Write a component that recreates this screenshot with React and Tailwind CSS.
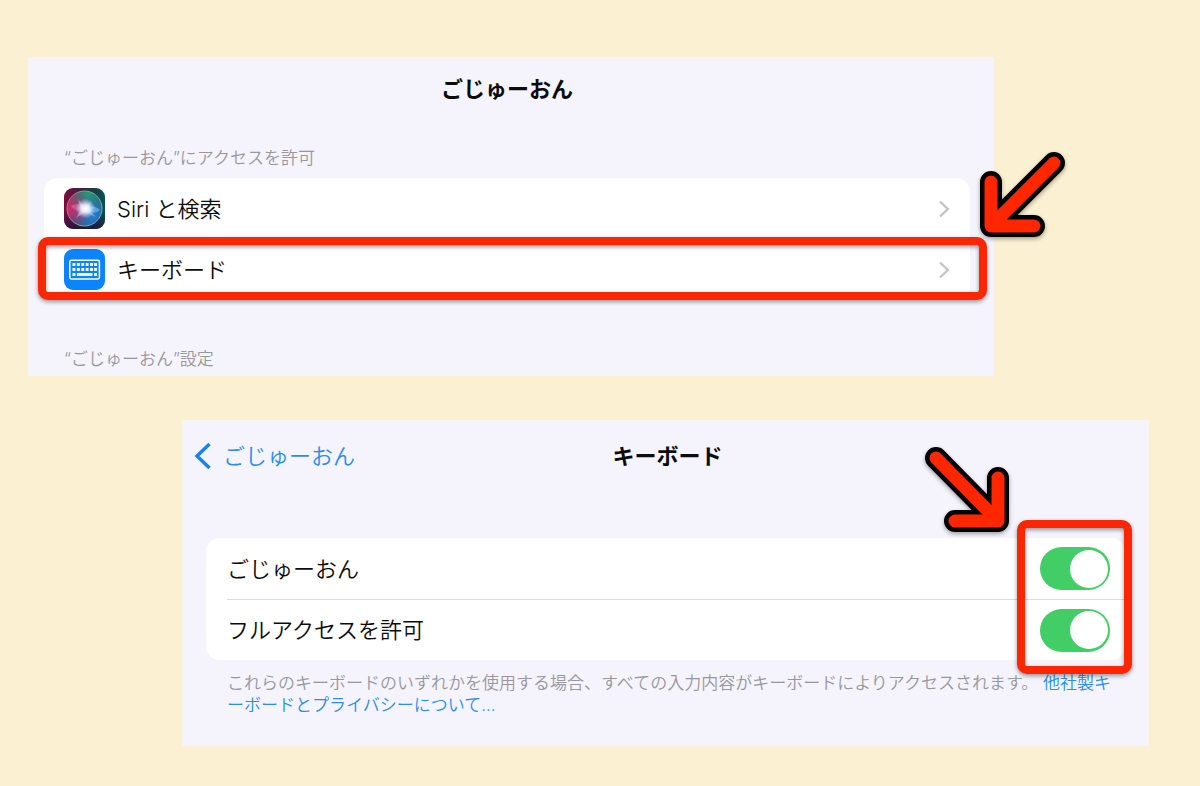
function SiriIcon() {
  return (
    <svg viewBox="0 0 41 41" className="size-[41px] shrink-0" aria-hidden="true">
      <defs>
        <linearGradient id="siri-bg" x1="0" y1="0" x2="1" y2="0">
          <stop offset="0" stopColor="#7d0a3c" />
          <stop offset="0.45" stopColor="#3b2440" />
          <stop offset="1" stopColor="#06544a" />
        </linearGradient>
        <linearGradient id="siri-shade" x1="0" y1="0" x2="0" y2="1">
          <stop offset="0.55" stopColor="#1f1440" stopOpacity="0" />
          <stop offset="1" stopColor="#1f1440" stopOpacity="0.8" />
        </linearGradient>
        <radialGradient id="siri-pink" cx="0.1" cy="0.5" r="0.6">
          <stop offset="0" stopColor="#d02c6c" />
          <stop offset="1" stopColor="#d02c6c" stopOpacity="0" />
        </radialGradient>
        <radialGradient id="siri-green" cx="0.6" cy="0.1" r="0.65">
          <stop offset="0" stopColor="#219a7a" />
          <stop offset="1" stopColor="#219a7a" stopOpacity="0" />
        </radialGradient>
        <radialGradient id="siri-blue" cx="0.72" cy="0.72" r="0.6">
          <stop offset="0" stopColor="#2380cf" />
          <stop offset="1" stopColor="#2380cf" stopOpacity="0" />
        </radialGradient>
        <radialGradient id="siri-glow" cx="0.5" cy="0.5" r="0.5">
          <stop offset="0" stopColor="#ffffff" />
          <stop offset="0.4" stopColor="#f2f7ff" stopOpacity="0.85" />
          <stop offset="1" stopColor="#d8dcff" stopOpacity="0" />
        </radialGradient>
        <linearGradient id="siri-ring" x1="0" y1="0.3" x2="1" y2="0.7">
          <stop offset="0" stopColor="#f0568d" />
          <stop offset="0.5" stopColor="#6fae9f" />
          <stop offset="1" stopColor="#54b4ee" />
        </linearGradient>
      </defs>
      <rect width="41" height="41" rx="9" fill="url(#siri-bg)" />
      <rect width="41" height="41" rx="9" fill="url(#siri-shade)" />
      <circle cx="20.5" cy="20.5" r="17.5" fill="#36506c" />
      <circle cx="20.5" cy="20.5" r="17.5" fill="url(#siri-green)" />
      <circle cx="20.5" cy="20.5" r="17.5" fill="url(#siri-blue)" />
      <circle cx="20.5" cy="20.5" r="17.5" fill="url(#siri-pink)" />
      <path d="M7 18c5-3 9-3 14 2-5 4-9 4-14-2z" fill="#ef9abf" opacity="0.35" />
      <path d="M21 20c5-3 11-2 15 2-4 4-10 4-15-2z" fill="#6cc3ff" opacity="0.6" />
      <path d="M14 11l7 9 6-7-3 8 8 8-11-5-9 6 5-9z" fill="#e6e4fa" opacity="0.4" />
      <circle cx="21.5" cy="20.5" r="10" fill="url(#siri-glow)" />
      <circle cx="20.5" cy="20.5" r="17.5" fill="none" stroke="url(#siri-ring)" strokeWidth="1" />
    </svg>
  );
}

function KeyboardIcon() {
  const cols = [8.5, 12.9, 17.3, 21.7, 26.1, 30.1];
  return (
    <svg viewBox="0 0 41 41" className="size-[41px] shrink-0" aria-hidden="true">
      <rect width="41" height="41" rx="9" fill="#0a84ff" />
      <rect x="5.8" y="11.3" width="29.6" height="18.6" rx="1.6" fill="none" stroke="#fff" strokeWidth="1.5" />
      {cols.map((x) => (
        <g key={x} fill="#fff">
          <rect x={x} y="14" width="2.9" height="2.9" />
          <rect x={x} y="19" width="2.9" height="2.9" />
        </g>
      ))}
      <rect x="8.5" y="24" width="2.9" height="2.9" fill="#fff" />
      <rect x="12.9" y="24" width="15.6" height="2.9" fill="#fff" />
      <rect x="30.1" y="24" width="2.9" height="2.9" fill="#fff" />
    </svg>
  );
}

function Chevron() {
  return (
    <svg viewBox="0 0 12 18" className="h-[18px] w-3" fill="none" stroke="#c4c4c6" strokeWidth="2.4" aria-hidden="true">
      <path d="M2 1.5L9.8 9 2 16.5" />
    </svg>
  );
}

function Arrow({ path, className }) {
  return (
    <svg
      viewBox="0 0 92 92"
      className={"pointer-events-none absolute z-10 size-[92px] drop-shadow-[0_2px_2px_rgba(0,0,0,0.35)] " + className}
      fill="none"
      strokeLinecap="round"
      strokeLinejoin="round"
      aria-hidden="true"
    >
      <path d={path} stroke="#000" strokeWidth="22" />
      <path d={path} stroke="#ff2600" strokeWidth="13" />
    </svg>
  );
}

function Highlight({ className }) {
  return (
    <div
      className={
        "pointer-events-none absolute rounded-[10px] border-8 border-[#fb2604] drop-shadow-[0_2px_2px_rgba(0,0,0,0.4)] " +
        className
      }
    />
  );
}

function LinkRow({ icon, children }) {
  return (
    <a href="#" className="flex h-[61px] items-center gap-3 pr-5 pl-5">
      {icon}
      <span className="grow text-[22px] leading-8">{children}</span>
      <Chevron />
    </a>
  );
}

function ToggleRow({ id, label, divided }) {
  return (
    <div className="pl-[21px]">
      <div className={"flex h-[61px] items-center justify-between pr-[15px] " + (divided ? "border-t border-[#dcdcde]" : "")}>
        <label htmlFor={id} className="text-[22px] leading-8">
          {label}
        </label>
        <input
          id={id}
          type="checkbox"
          role="switch"
          defaultChecked
          className="flex h-[43px] w-[70px] appearance-none items-center justify-start rounded-full bg-[#e4e4e6] px-[2px] before:size-[38px] before:rounded-full before:bg-white before:content-[''] checked:justify-end checked:bg-[#42cd66]"
        />
      </div>
    </div>
  );
}

export default function App() {
  return (
    <main
      lang="ja"
      className="flex min-h-screen flex-col gap-11 bg-[#fbf0d1] pt-[57px] pb-10 font-['Inter','Noto_Sans_CJK_JP',sans-serif] font-[350] text-[#0c0c0c]"
    >
      <section className="mr-[206px] ml-7 bg-[#f5f4fd] pt-4 pr-6 pb-[5px] pl-4">
        <h1 className="text-center text-[22px] leading-8 font-bold">ごじゅーおん</h1>
        <h2 className="mt-[41px] mb-2 pl-5 text-[17px] leading-6 text-[#97979c]">“ごじゅーおん”にアクセスを許可</h2>
        <div className="relative rounded-[14px] bg-white">
          <LinkRow icon={<SiriIcon />}>Siri と検索</LinkRow>
          <div className="relative">
            <LinkRow icon={<KeyboardIcon />}>キーボード</LinkRow>
            <Highlight className="-top-[2px] -right-[17px] bottom-0 -left-[6px]" />
          </div>
          <Arrow path="M86 14L23 77M23 33V77H66" className="-top-[29px] -right-[90px] overflow-visible" />
        </div>
        <h2 className="mt-[47px] pl-5 text-[17px] leading-6 text-[#97979c]">“ごじゅーおん”設定</h2>
      </section>

      <section className="mr-[51px] ml-[182px] bg-[#f5f4fd] pt-5 pb-[30px]">
        <header className="grid grid-cols-[1fr_auto_1fr] items-center pr-2 pl-3">
          <a href="#" className="flex items-center gap-3 text-[22px] leading-8 text-[#2a8ceb]">
            <svg viewBox="0 0 17 28" className="h-7 w-[17px]" fill="none" stroke="#1583f2" strokeWidth="3.4" aria-hidden="true">
              <path d="M15.5 2L3 14l12.5 12" />
            </svg>
            ごじゅーおん
          </a>
          <h1 className="text-[22px] leading-8 font-bold">キーボード</h1>
        </header>
        <div className="mt-[66px] px-6">
          <div className="relative rounded-[14px] bg-white">
            <ToggleRow id="gojuon" label="ごじゅーおん" />
            <ToggleRow id="full-access" label="フルアクセスを許可" divided />
            <Highlight className="-top-[18px] -right-[7px] -bottom-[14px] w-[115px]" />
            <Arrow path="M14 18L76 81M76 38V81H33" className="-top-[98px] right-[111px] overflow-visible" />
          </div>
          <p className="mt-3 pr-1 pl-[21px] text-[17px] leading-[22px] text-[#97979c] [line-break:anywhere]">
            これらのキーボードのいずれかを使用する場合、すべての入力内容がキーボードによりアクセスされます。{" "}
            <a href="#" className="text-[#2a8ceb]">
              他社製キーボードとプライバシーについて...
            </a>
          </p>
        </div>
      </section>
    </main>
  );
}
